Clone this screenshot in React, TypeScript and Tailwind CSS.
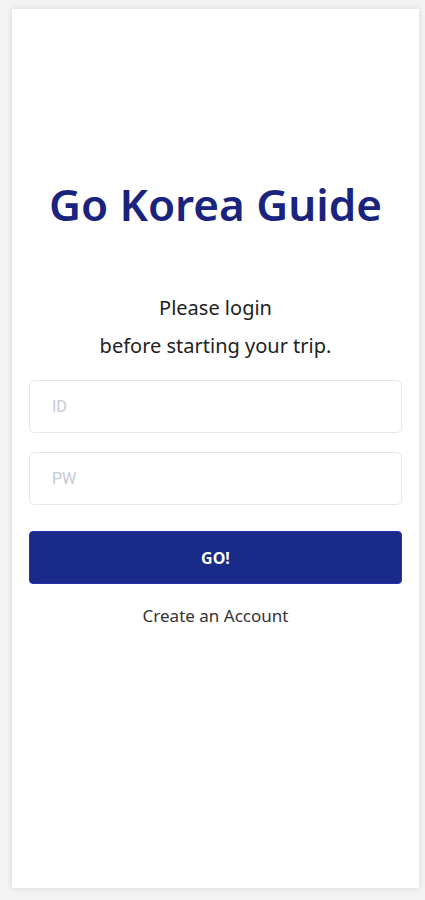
export default function App() {
  return (
    <div className="w-full min-h-[900px] bg-[#f3f3f3] pt-[9px]" style={{ fontFamily: '"Noto Sans", "Open Sans", sans-serif' }}>
      <div className="ml-[12px] mr-[6px] h-[879px] bg-white shadow-[0_0_6px_rgba(0,0,0,0.12)] px-[17px] flex flex-col">
        <h1 className="mt-[160px] text-center text-[44px] leading-[70px] font-semibold text-[#1a237e]">Go Korea Guide</h1>

        <p className="mt-[50px] text-center text-[20px] leading-[38px] text-[#222]">
          Please login
          <br />
          before starting your trip.
        </p>

        <div className="mt-[15px] flex flex-col gap-[19px]">
          <input
            placeholder="ID"
            className="h-[53px] w-full rounded-[5px] border border-[#e6e8ec] px-[22px] text-[16px] outline-none placeholder:text-[#c4cad6]"
            style={{ fontFamily: 'Roboto, "Liberation Sans", sans-serif' }}
          />
          <input
            placeholder="PW"
            type="password"
            className="h-[53px] w-full rounded-[5px] border border-[#e6e8ec] px-[22px] text-[16px] outline-none placeholder:text-[#c4cad6]"
            style={{ fontFamily: 'Roboto, "Liberation Sans", sans-serif' }}
          />
        </div>

        <button className="mt-[26px] h-[53px] w-full rounded-[4px] border border-[#2b2fb0] bg-[#1a2a88] text-[16px] font-bold text-white">
          GO!
        </button>

        <p className="mt-[19px] text-center text-[17px] text-[#333]">Create an Account</p>
      </div>
    </div>
  )
}
